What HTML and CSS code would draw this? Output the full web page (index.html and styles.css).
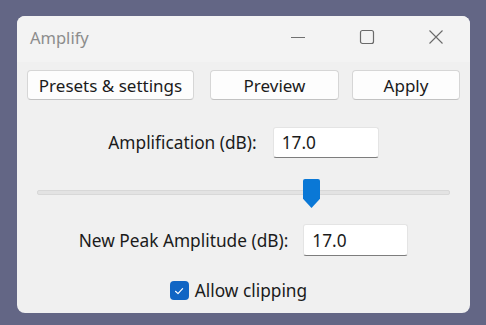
FILE: index.html
```html
<!DOCTYPE html>
<html>
<head>
<meta charset="utf-8">
<link rel="stylesheet" href="styles.css">
</head>
<body>
<div class="window">
  <div class="titlebar">
    <div class="title">Amplify</div>
    <div class="caption">
      <div class="cap-btn">
        <svg width="16" height="16" viewBox="0 0 16 16"><line x1="1" y1="8.5" x2="15" y2="8.5" stroke="#707070" stroke-width="1"/></svg>
      </div>
      <div class="cap-btn">
        <svg width="16" height="16" viewBox="0 0 16 16"><rect x="1.5" y="1.5" width="13" height="13" rx="2" fill="none" stroke="#6a6a6a" stroke-width="1.2"/></svg>
      </div>
      <div class="cap-btn">
        <svg width="16" height="16" viewBox="0 0 16 16"><path d="M1.5 1.5 L14.5 14.5 M14.5 1.5 L1.5 14.5" stroke="#6a6a6a" stroke-width="1.1" fill="none"/></svg>
      </div>
    </div>
  </div>
  <div class="content">
    <div class="buttons">
      <div class="btn btn-presets">Presets &amp; settings</div>
      <div class="btn btn-preview">Preview</div>
      <div class="btn btn-apply">Apply</div>
    </div>
    <div class="row row-amp">
      <span class="label">Amplification (dB):</span>
      <div class="field field-amp">17.0</div>
    </div>
    <div class="slider">
      <div class="track"></div>
      <div class="thumb" style="left: 266px"></div>
    </div>
    <div class="row row-peak">
      <span class="label">New Peak Amplitude (dB):</span>
      <div class="field field-peak">17.0</div>
    </div>
    <div class="row row-check">
      <div class="checkbox">
        <svg width="12" height="12" viewBox="0 0 12 12"><path d="M2.5 6.3 L5 8.6 L9.6 3.6" stroke="#ffffff" stroke-width="1.2" fill="none" stroke-linecap="round" stroke-linejoin="round"/></svg>
      </div>
      <span class="label">Allow clipping</span>
    </div>
  </div>
</div>
</body>
</html>
```

FILE: styles.css
```css
* { box-sizing: border-box; }
html, body { margin: 0; padding: 0; }
body {
  width: 486px;
  height: 325px;
  background: #636685;
  font-family: "Noto Sans", "Open Sans", sans-serif;
  color: #1b1b1b;
  padding: 16px 0 0 17px;
  overflow: hidden;
}
.window {
  width: 453px;
  height: 297px;
  background: #f0f0f0;
  border-radius: 8px;
  overflow: hidden;
}
.titlebar {
  height: 46px;
  background: #f3f3f3;
  display: flex;
  align-items: center;
  padding-bottom: 4px;
}
.title {
  flex: 1;
  padding-left: 13px;
  font-size: 16.5px;
  color: #8c8c8c;
}
.caption { display: flex; height: 100%; }
.cap-btn {
  width: 69px;
  display: flex;
  align-items: center;
  justify-content: center;
}
.content {
  padding: 8px 10px 0 10px;
}
.buttons {
  display: flex;
  height: 30px;
}
.btn {
  height: 30px;
  background: #fdfdfd;
  border: 1px solid #d6d6d6;
  border-bottom-color: #c2c2c2;
  border-radius: 4px;
  display: flex;
  align-items: center;
  justify-content: center;
  font-size: 17px;
}
.btn-presets { width: 167px; }
.btn-preview { width: 129px; margin-left: 16px; }
.btn-apply { width: 108px; margin-left: 13px; }
.row {
  display: flex;
  align-items: center;
  justify-content: center;
}
.label { font-size: 17.3px; }
.row-amp { margin-top: 27px; gap: 16px; }
.row-peak { margin-top: 16px; gap: 15px; }
.field {
  background: #ffffff;
  border: 1px solid #e4e4e4;
  border-bottom: 1px solid #7d7d7d;
  border-radius: 3px;
  padding-left: 8px;
  display: flex;
  align-items: center;
  font-size: 17.3px;
}
.field-amp { width: 106px; height: 31px; }
.field-peak { width: 105px; height: 32px; }
.slider {
  position: relative;
  margin: 21px 10px 0 10px;
  padding-top: 11px;
  height: 29px;
}
.track {
  height: 5px;
  background: #e3e3e3;
  border: 1px solid #d8d8d8;
  border-radius: 2px;
}
.thumb {
  position: absolute;
  top: 0;
  width: 17px;
  height: 29px;
  background: #0a78d6;
  border-radius: 2px 2px 0 0;
  clip-path: polygon(0 0, 100% 0, 100% 68%, 50% 100%, 0 68%);
}
.row-check { margin-top: 23px; gap: 6px; padding-right: 10px; }
.checkbox {
  width: 19px;
  height: 19px;
  background: #1065c4;
  border-radius: 4px;
  display: flex;
  align-items: center;
  justify-content: center;
}
```
